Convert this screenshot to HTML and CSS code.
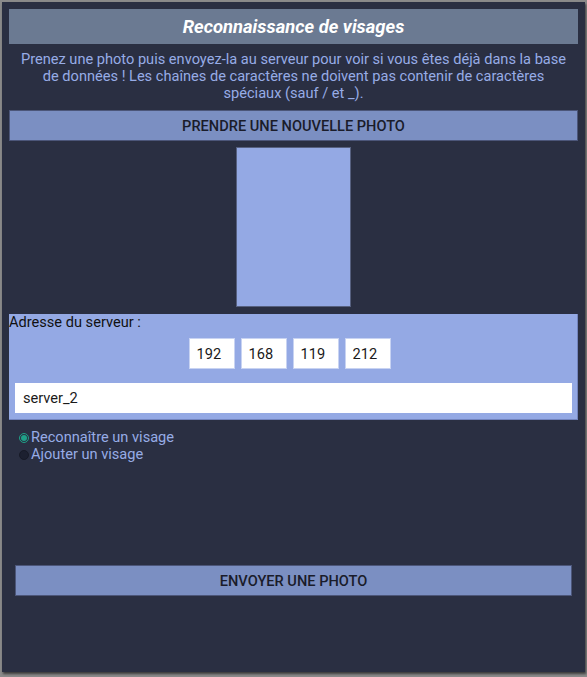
FILE: index.html
```html
<!DOCTYPE html>
<html lang="fr">
<head>
<meta charset="utf-8">
<title>Reconnaissance de visages</title>
<link rel="stylesheet" href="styles.css">
</head>
<body>
<main class="panel">
  <h1 class="title">Reconnaissance de visages</h1>
  <p class="intro">Prenez une photo puis envoyez-la au serveur pour voir si vous êtes déjà dans la base de données ! Les chaînes de caractères ne doivent pas contenir de caractères spéciaux (sauf / et _).</p>
  <button class="btn btn-full">PRENDRE UNE NOUVELLE PHOTO</button>
  <div class="photo-row"><div class="photo"></div></div>
  <section class="server">
    <div class="server-label">Adresse du serveur :</div>
    <div class="ip-row">
      <input class="ip" type="text" value="192">
      <input class="ip" type="text" value="168">
      <input class="ip" type="text" value="119">
      <input class="ip" type="text" value="212">
    </div>
    <input class="name" type="text" value="server_2">
  </section>
  <div class="radios">
    <label class="radio"><span class="dot on"></span>Reconnaître un visage</label>
    <label class="radio"><span class="dot"></span>Ajouter un visage</label>
  </div>
  <div class="send-wrap"><button class="btn btn-send">ENVOYER UNE PHOTO</button></div>
</main>
</body>
</html>
```
FILE: styles.css
```css
html, body {
  margin: 0;
  padding: 0;
}
body {
  background: #8a8a8a;
  width: 587px;
  height: 677px;
  padding: 2px 0 0 2px;
  box-sizing: border-box;
  font-family: Roboto, "Liberation Sans", sans-serif;
  font-size: 14.6px;
}
.panel {
  width: 583px;
  height: 670px;
  box-sizing: border-box;
  background: #2a2f42;
  padding: 7px 7px 0 7px;
  display: flex;
  flex-direction: column;
  box-shadow: 1px 2px 2px rgba(30, 30, 30, 0.7);
}
.title {
  margin: 0;
  height: 35px;
  background: #6b7a92;
  color: #ffffff;
  font-size: 18.4px;
  font-weight: 700;
  font-style: italic;
  display: flex;
  align-items: center;
  justify-content: center;
}
.intro {
  margin: 7px 4px 8px;
  color: #97ace6;
  line-height: 17px;
  text-align: center;
}
.btn {
  font-family: Roboto, "Liberation Sans", sans-serif;
  font-size: 14.6px;
  font-weight: 500;
  color: #1a1c2a;
  background: #7b8fc2;
  border: 1px solid #4c5679;
  height: 31px;
  padding: 0;
  box-sizing: border-box;
}
.btn-full {
  width: 100%;
}
.photo-row {
  display: flex;
  justify-content: center;
  margin: 6px 0 7px;
  padding-right: 1px;
}
.photo {
  width: 115px;
  height: 160px;
  box-sizing: border-box;
  background: #94a9e4;
  border: 1px solid #56607f;
}
.server {
  background: #94a9e4;
  height: 106px;
  box-sizing: border-box;
  padding: 0 6px 6px;
  display: flex;
  flex-direction: column;
  border-right: 1px solid #7384bd;
  border-bottom: 1px solid #7384bd;
}
.server-label {
  margin-left: -6px;
  color: #111111;
  line-height: 17px;
  height: 17px;
}
.ip-row {
  display: flex;
  justify-content: center;
  gap: 6px;
  margin-top: 7px;
  padding-right: 7px;
}
.ip {
  width: 46px;
  height: 31px;
  box-sizing: border-box;
  border: 1px solid #c8d3f2;
  background: #ffffff;
  padding: 0 0 0 7px;
  font-family: Roboto, "Liberation Sans", sans-serif;
  font-size: 14.6px;
  color: #1a1a1a;
  outline: none;
}
.name {
  margin-top: 14px;
  width: 557px;
  height: 31px;
  box-sizing: border-box;
  border: none;
  background: #ffffff;
  padding: 0 0 0 8px;
  font-family: Roboto, "Liberation Sans", sans-serif;
  font-size: 14.6px;
  color: #1a1a1a;
  outline: none;
}
.radios {
  margin: 9px 0 0 9px;
  display: flex;
  flex-direction: column;
}
.radio {
  display: flex;
  align-items: center;
  color: #97ace6;
  line-height: 17px;
  font-size: 14.6px;
}
.dot {
  width: 10px;
  height: 10px;
  border-radius: 50%;
  border: 1px solid #171a27;
  background: #1c2030;
  margin-right: 2px;
  margin-left: 1px;
  box-sizing: border-box;
  position: relative;
}
.dot.on {
  border: 1px solid #1fa088;
  background: #2a2f42;
}
.dot.on::after {
  content: "";
  position: absolute;
  left: 1px;
  top: 1px;
  width: 6px;
  height: 6px;
  border-radius: 50%;
  background: #1fa088;
}
.send-wrap {
  margin-top: 102px;
  padding: 0 6px;
}
.btn-send {
  width: 100%;
}
```
